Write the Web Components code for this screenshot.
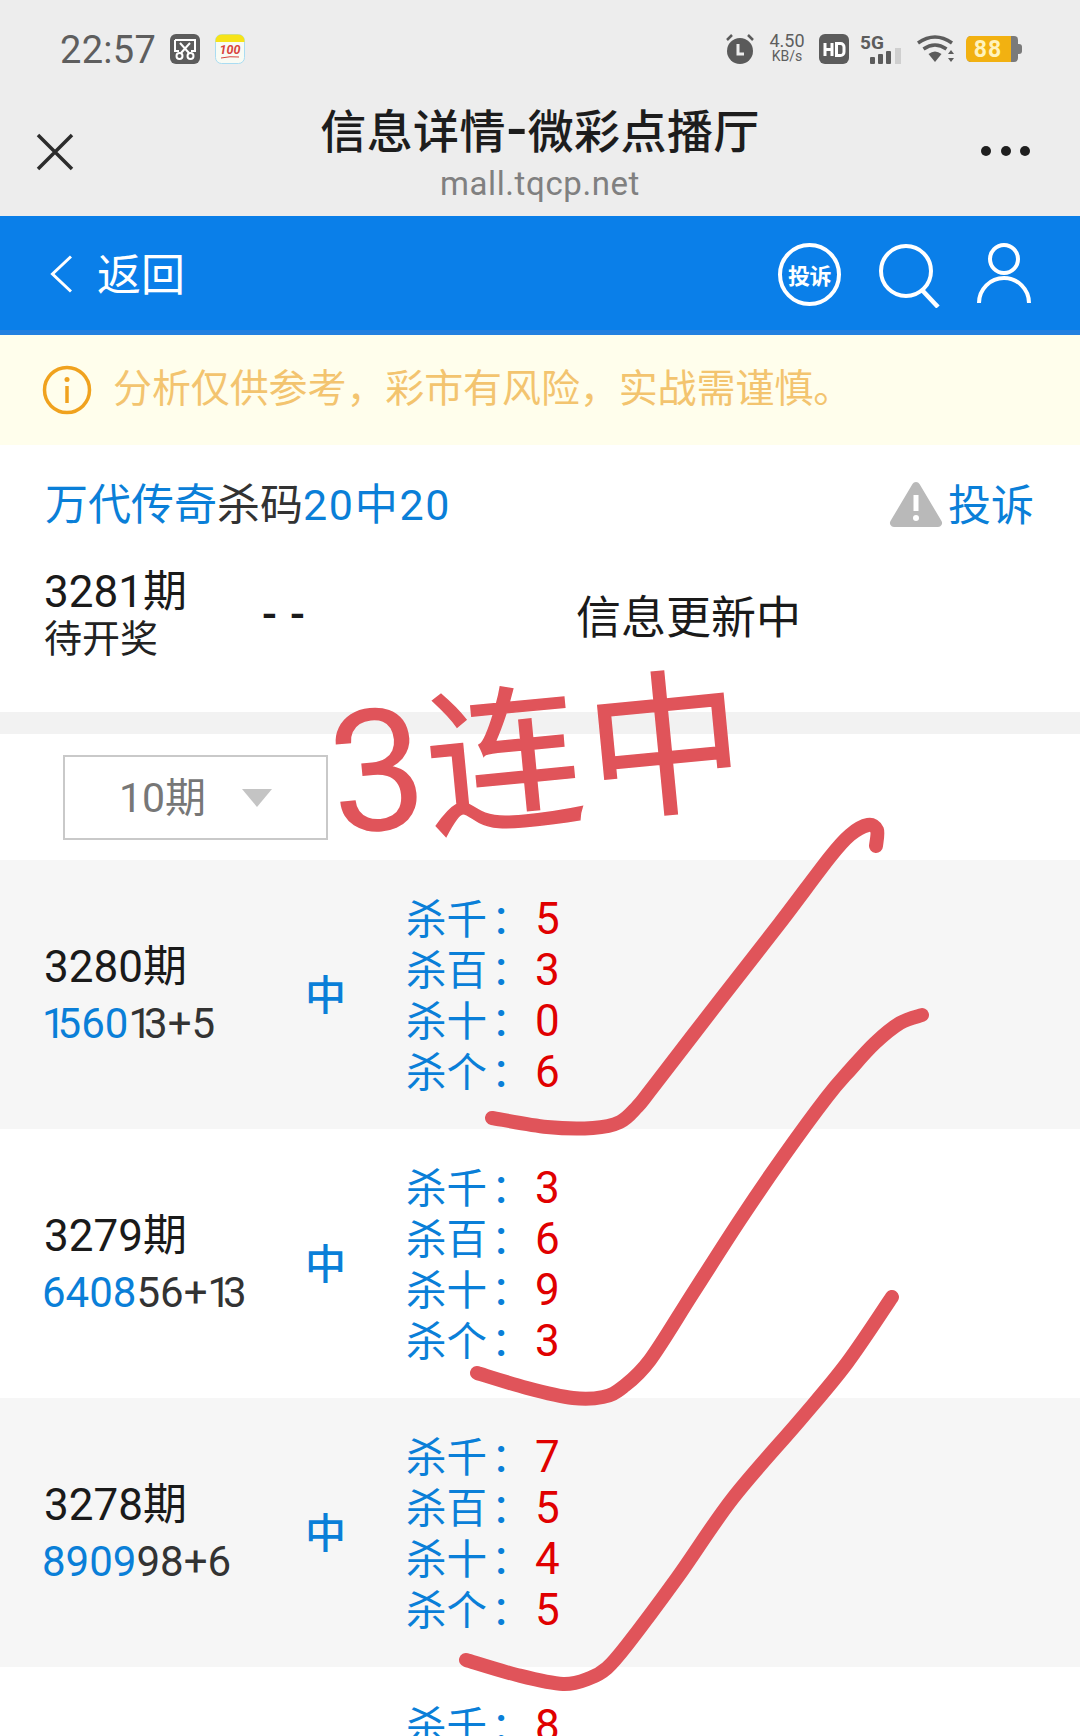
<!DOCTYPE html>
<html lang="zh-CN"><head><meta charset="utf-8"><title>信息详情-微彩点播厅</title>
<style>
html,body{margin:0;padding:0;background:#fff}
body{width:1080px;height:1736px;overflow:hidden;position:relative;font-family:Roboto,"Noto Sans CJK SC",sans-serif}
</style></head><body>
<app-status></app-status>
<app-title heading="信息详情-微彩点播厅" url="mall.tqcp.net"></app-title>
<app-nav></app-nav>
<app-notice>分析仅供参考，彩市有风险，实战需谨慎。</app-notice>
<info-head></info-head>
<latest-row></latest-row>
<period-select>10期</period-select>
<draw-row period="3280" hit="1560" rest="13+5" nums="5,3,0,6" alt></draw-row>
<draw-row period="3279" hit="6408" rest="56+13" nums="3,6,9,3"></draw-row>
<draw-row period="3278" hit="8909" rest="98+6" nums="7,5,4,5" alt></draw-row>
<draw-row nums="8"></draw-row>
<ink-overlay></ink-overlay>
<script>
function def(name,html){
  customElements.define(name,class extends HTMLElement{
    constructor(){super();this.attachShadow({mode:'open'});}
    connectedCallback(){this.shadowRoot.innerHTML=typeof html==='function'?html(this):html;}
  });
}
def('app-status',`<style>
:host{display:flex;box-sizing:border-box;height:96px;background:#ededed;padding:31px 58px 0 60px;justify-content:space-between;align-items:flex-start;color:#5e5e5e}
.l,.r{display:flex;align-items:flex-start}
.t{font:38px/34px Roboto,sans-serif;width:110px;letter-spacing:.3px;margin-top:2px}
svg{display:block}
.sp{width:40px;margin:0 12px 0 11px;text-align:center;color:#5e5e5e}
.sp b{display:block;font:400 18px/16px Roboto,sans-serif;margin-top:2px}
.sp i{display:block;font:400 14px/14px Roboto,sans-serif;font-style:normal}
</style>
<div class="l"><span class="t">22:57</span>
<svg width="30" height="30" viewBox="0 0 30 30" style="margin-top:3px"><rect width="30" height="30" rx="6" fill="#5c5c5c"/><path d="M5 6h20v11h-4M5 6v11h4" fill="none" stroke="#fff" stroke-width="2"/><path d="M10 9l9 10M20 9l-9 10" stroke="#fff" stroke-width="2"/><circle cx="9.500" cy="22" r="3" fill="none" stroke="#fff" stroke-width="2"/><circle cx="20.500" cy="22" r="3" fill="none" stroke="#fff" stroke-width="2"/></svg>
<svg width="30" height="30" viewBox="0 0 30 30" style="margin:3px 0 0 15px"><rect x=".5" y=".5" width="29" height="29" rx="6" fill="#f8fbf4" stroke="#a9dcf2"/><path d="M.5 6.500a6 6 0 0 1 6-6h17a6 6 0 0 1 6 6V8H.5z" fill="#f7e318"/><text x="15" y="20" text-anchor="middle" font-family="Roboto" font-style="italic" font-weight="700" font-size="12.500" fill="#d8443c">100</text><path d="M6 24q9-2 18-1" stroke="#d8443c" fill="none"/></svg></div>
<div class="r">
<svg width="32" height="32" viewBox="0 0 32 32" style="margin:2px 0 0 2px"><path d="M3 7l5-5M29 7l-5-5" stroke="#5a5a5a" stroke-width="2.500"/><circle cx="16" cy="18" r="13" fill="#5a5a5a"/><path d="M14 11v10h6" fill="none" stroke="#ededed" stroke-width="3"/></svg>
<div class="sp"><b>4.50</b><i>KB/s</i></div>
<svg width="30" height="30" viewBox="0 0 30 30" style="margin-top:3px"><rect width="30" height="30" rx="6" fill="#5c5c5c"/><path d="M6 9v13M13 9v13M6 15.500h7" stroke="#fff" stroke-width="3" fill="none"/><path d="M17.500 9.500h4a3.500 3.500 0 0 1 3.500 3.500v5a3.500 3.500 0 0 1-3.500 3.500h-4z" stroke="#fff" stroke-width="3" fill="none"/></svg>
<svg width="46" height="32" viewBox="0 0 46 32" style="margin:2px 0 0 11px"><text x="0" y="16" font-family="Roboto" font-weight="700" font-size="19" fill="#5c5c5c">5G</text><g fill="#5c5c5c"><rect x="10" y="24" width="5" height="7" rx="1"/><rect x="18" y="21" width="5" height="10" rx="1"/><rect x="26" y="18" width="5" height="13" rx="1"/></g><rect x="35" y="15" width="6" height="16" fill="#cfcfcf"/></svg>
<svg width="38" height="30" viewBox="0 0 38 30" style="margin:3px 0 0 11px"><g fill="none" stroke="#5c5c5c" stroke-width="3.500"><path d="M1 9q17-12 34 0"/><path d="M6.500 15q11.500-8 23 0"/></g><path d="M11.500 20q6.500-5 13 0l-6.500 8z" fill="#5c5c5c"/><path d="M31 20l3-4 3 4zM31 24h6l-3 4z" fill="#5c5c5c"/></svg>
<svg width="56" height="28" viewBox="0 0 56 28" style="margin:5px 0 0 11px"><rect x="1" width="51" height="26" rx="4" fill="#7a7a7a"/><path d="M52 8h1a3 3 0 0 1 3 3v4a3 3 0 0 1-3 3h-1z" fill="#7a7a7a"/><path d="M5 0h40v26H5a5 5 0 0 1-5-5V5a5 5 0 0 1 5-5z" fill="#f2b111"/><text x="22" y="21" text-anchor="middle" font-family="Roboto" font-weight="700" font-size="23" letter-spacing="1" fill="#fff3bd">88</text></svg>
</div>`);
def('app-title',h=>`<style>
:host{display:grid;box-sizing:border-box;height:120px;background:#ededed;grid-template-columns:1fr auto 1fr;padding:0 50px;position:relative}
.x{align-self:start;margin:37px 0 0 -14px}
.c{text-align:center}
.h{font:500 46px/58px "Noto Sans CJK SC",sans-serif;color:#1d1d1d;margin-top:3px;letter-spacing:.4px}
.h span{font-size:60px;line-height:0}
.u{font:33px/40px Roboto,sans-serif;color:#808080;margin-top:7px;letter-spacing:.6px}
.m{align-self:start;justify-self:end;margin-top:50px;display:flex;gap:9.500px}
.m i{width:10px;height:10px;border-radius:50%;background:#1f1f1f}
</style>
<svg class="x" width="38" height="38" viewBox="0 0 38 38"><path d="M2 2l34 34M36 2L2 36" stroke="#2c2c2c" stroke-width="3.500"/></svg>
<div class="c"><div class="h">${(h.getAttribute('heading')||'').replace('-','<span>-</span>')}</div><div class="u">${h.getAttribute('url')||''}</div></div>
<div class="m"><i></i><i></i><i></i></div>`);
def('app-nav',`<style>
:host{display:flex;box-sizing:border-box;height:119px;background:#0a7fe9;border-bottom:5px solid #2280e0;align-items:center;color:#fff;padding:0 47px 0 50px}
.b{font:44px/60px "Noto Sans CJK SC",sans-serif;margin-left:25px;margin-top:-2px;flex:1}
svg{display:block}
.c{width:63px;height:63px;margin-right:37px;margin-top:3px;box-sizing:border-box;border:4px solid #fff;border-radius:50%;font:700 22px/54px "Noto Sans CJK SC",sans-serif;text-align:center;white-space:nowrap;letter-spacing:-.5px}
</style>
<svg width="22" height="38" viewBox="0 0 22 38" style="margin-top:2px"><path d="M21 1.500L2.500 19 21 36.500" fill="none" stroke="#fff" stroke-width="3"/></svg>
<span class="b">返回</span>
<span class="c">投诉</span>
<svg width="62" height="66" viewBox="0 0 62 66" style="margin:4px 35px 0 0"><circle cx="28" cy="29" r="25" fill="none" stroke="#fff" stroke-width="4"/><path d="M44 48l16 17" stroke="#fff" stroke-width="4.500"/></svg>
<svg width="58" height="62" viewBox="0 0 58 62" style="margin-top:2px"><circle cx="29" cy="16" r="14" fill="none" stroke="#fff" stroke-width="4"/><path d="M4 60a25 25 0 0 1 50 0" fill="none" stroke="#fff" stroke-width="4"/></svg>`);
def('app-notice',`<style>
:host{display:flex;box-sizing:border-box;height:110px;background:#fffeec;align-items:center;padding:0 0 10px 42px;color:#f3c46f;font:39px/50px "Noto Sans CJK SC",sans-serif;letter-spacing:-.1px}
svg{margin-right:21px;display:block;flex:none;margin-top:10px}
</style>
<svg width="50" height="50" viewBox="0 0 50 50"><circle cx="25" cy="25" r="22.500" fill="none" stroke="#f0a21e" stroke-width="3.500"/><circle cx="25" cy="14.500" r="2.500" fill="#f0a21e"/><path d="M25 21v17" stroke="#f0a21e" stroke-width="3.500"/></svg>
<slot></slot>`);
def('info-head',`<style>
:host{display:flex;box-sizing:border-box;height:100px;background:#fff;align-items:center;justify-content:space-between;padding:20px 46px 0 45px;font:43px/60px Roboto,"Noto Sans CJK SC",sans-serif;color:#0a7fd8}
b{font-weight:400;color:#333}
.n{letter-spacing:1.7px}
.r{display:flex;align-items:center;gap:5px;margin-top:2px}
svg{display:block;margin-top:-5px}
</style>
<div>万代传奇<b>杀码</b><span class="n">20中20</span></div>
<div class="r"><svg width="54" height="46" viewBox="0 0 54 46"><path d="M27 1a4 4 0 0 1 3.500 2l22 37a4 4 0 0 1-3.500 6H5a4 4 0 0 1-3.500-6l22-37A4 4 0 0 1 27 1z" fill="#b9b9b9"/><path d="M27 14v16" stroke="#fff" stroke-width="5"/><circle cx="27" cy="37" r="3" fill="#fff"/></svg><span>投诉</span></div>`);
def('latest-row',`<style>
:host{display:grid;box-sizing:border-box;height:189px;background:#fff;grid-template-columns:218px 314px auto;padding:21px 0 0 44px;color:#1a1a1a;border-bottom:22px solid #f2f2f2;align-items:start}
.p{font:44px/52px Roboto,"Noto Sans CJK SC",sans-serif}
.s{font:38px/36px "Noto Sans CJK SC",sans-serif;color:#222}
.d{font:500 44px/52px Roboto,sans-serif;letter-spacing:13px;margin-top:22px}
.i{font:45px/56px "Noto Sans CJK SC",sans-serif;margin-top:21px}
</style>
<div><div class="p">3281期</div><div class="s">待开奖</div></div>
<div class="d">--</div><div class="i">信息更新中</div>`);
def('period-select',`<style>
:host{display:block;box-sizing:border-box;height:126px;background:#fff;padding:21px 0 0 63px}
.b{display:flex;box-sizing:border-box;width:265px;height:85px;border:2px solid #c9c9c9;align-items:center;padding-left:54px;color:#777;font:41px/56px Roboto,"Noto Sans CJK SC",sans-serif}
svg{margin-left:36px;display:block}
</style>
<div class="b"><slot></slot><svg width="30" height="18" viewBox="0 0 30 18"><path d="M0 0h30L15 18z" fill="#c4c4c4"/></svg></div>`);
const narrow=s=>s.replace(/1/g,'<i>1</i>');
def('draw-row',h=>{
  const n=(h.getAttribute('nums')||'').split(','),lab=['杀千','杀百','杀十','杀个'];
  const p=h.getAttribute('period');
  const left=p?`<div><div class="p">${p}期</div><div class="c"><span>${narrow(h.getAttribute('hit'))}</span>${narrow(h.getAttribute('rest'))}</div></div><div class="z">中</div>`:'<div></div><div></div>';
  return `<style>
:host{display:grid;box-sizing:border-box;height:269px;grid-template-columns:263px 99px auto;padding:33px 0 0 44px;background:#fff;color:#333;align-items:start}
:host([alt]){background:#f6f6f6}
.p{font:44px/56px Roboto,"Noto Sans CJK SC",sans-serif;color:#1a1a1a;margin-top:46px}
.c{font:42px/50px Roboto,sans-serif;margin:4px 0 0 -2px;white-space:nowrap}
.c i{font-style:normal;letter-spacing:-8px}
.c span,.z,.l{color:#0a7fd8}
.z{font:500 41px/56px "Noto Sans CJK SC",sans-serif;margin:71px 0 0 -2px}
.row{font:41px/51px "Noto Sans CJK SC",sans-serif;white-space:nowrap;display:flex;height:51px}
.l{width:129px;font-size:40.500px;margin-top:-2px}
.l u{text-decoration:none;font-family:"Noto Sans CJK JP",sans-serif;margin-left:4px}
.n{font-family:Roboto,sans-serif;color:#e00000;font-size:44px;line-height:51px;margin-top:1px}
</style>
${left}
<div>${n.map((v,i)=>`<div class="row"><span class="l">${lab[i]}<u>：</u></span><span class="n">${v}</span></div>`).join('')}</div>`;
});
function spline(p){let d=`M${p[0][0]} ${p[0][1]}`;for(let i=0;i<p.length-1;i++){const a=p[i-1]||p[i],b=p[i],c=p[i+1],e=p[i+2]||c;
 d+=`C${(b[0]+(c[0]-a[0])/6).toFixed(1)} ${(b[1]+(c[1]-a[1])/6).toFixed(1)} ${(c[0]-(e[0]-b[0])/6).toFixed(1)} ${(c[1]-(e[1]-b[1])/6).toFixed(1)} ${c[0]} ${c[1]}`;}return d;}
const S=[
[[876,846],[877,830],[868,825],[850,835],[830,857],[780,923],[720,1000],[653,1087],[637,1107],[620,1122],[593,1128],[547,1127],[492,1118]],
[[922,1015],[900,1023],[875,1043],[850,1070],[827,1097],[783,1157],[740,1220],[693,1293],[650,1360],[623,1387],[603,1397],[573,1398],[527,1388],[477,1373]],
[[892,1297],[847,1363],[800,1420],[733,1498],[677,1578],[627,1645],[607,1668],[590,1678],[563,1684],[517,1675],[466,1660]]];
def('ink-overlay',`<style>
:host{display:block;position:absolute;left:0;top:0;width:1080px;height:1736px;pointer-events:none;overflow:hidden}
svg{position:absolute;left:0;top:0}
.t{position:absolute;left:339px;top:671px;transform:rotate(-5.5deg);transform-origin:0 100%;color:#e0545a;white-space:nowrap;font:400 156px/190px "Noto Sans CJK SC",sans-serif;letter-spacing:6px;-webkit-text-stroke:1.5px #e0545a}
.t span{font:400 170px/190px Roboto,sans-serif;letter-spacing:1px;-webkit-text-stroke:0}
</style>
<div class="t"><span>3</span>连中</div>
<svg width="1080" height="1736" viewBox="0 0 1080 1736" fill="none" stroke="#e0545a" stroke-width="14" stroke-linecap="round" stroke-linejoin="round">${S.map(p=>`<path d="${spline(p)}"/>`).join('')}</svg>`);
</script>
</body></html>
